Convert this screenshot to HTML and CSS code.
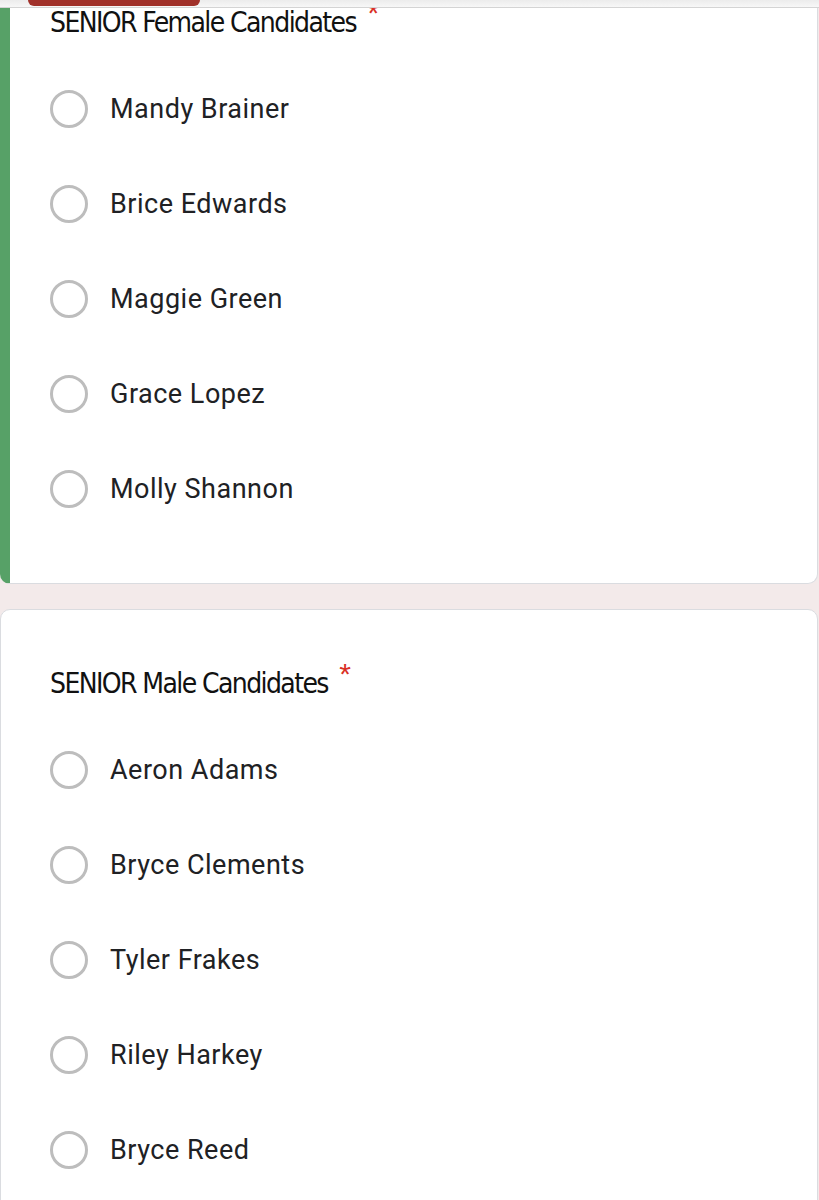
FILE: index.html
```html
<!DOCTYPE html>
<html lang="en">
<head>
    <meta charset="UTF-8">
    <meta name="viewport" content="width=device-width, initial-scale=1.0">
    <title>Senior Candidates</title>
    <link rel="stylesheet" href="styles.css">
</head>
<body>
    <div class="top-shade">
        <div class="tab"></div>
    </div>

    <div class="form">
        <div class="card active">
            <div class="question">SENIOR Female Candidates <span class="req">*</span></div>
            <label class="option"><span class="radio"></span>Mandy Brainer</label>
            <label class="option"><span class="radio"></span>Brice Edwards</label>
            <label class="option"><span class="radio"></span>Maggie Green</label>
            <label class="option"><span class="radio"></span>Grace Lopez</label>
            <label class="option"><span class="radio"></span>Molly Shannon</label>
        </div>

        <div class="card">
            <div class="question">SENIOR Male Candidates <span class="req">*</span></div>
            <label class="option"><span class="radio"></span>Aeron Adams</label>
            <label class="option"><span class="radio"></span>Bryce Clements</label>
            <label class="option"><span class="radio"></span>Tyler Frakes</label>
            <label class="option"><span class="radio"></span>Riley Harkey</label>
            <label class="option"><span class="radio"></span>Bryce Reed</label>
        </div>
    </div>
</body>
</html>
```

FILE: styles.css
```css
body {
    margin: 0;
    background-color: #f3eaea;
    font-family: Roboto, "Liberation Sans", sans-serif;
    overflow: hidden;
}
.top-shade {
    position: fixed;
    top: 0;
    left: 0;
    right: 0;
    height: 7px;
    background: linear-gradient(#ececec, #f7f7f7);
    border-bottom: 1px solid #d4d4d4;
    z-index: 2;
}
.tab {
    position: absolute;
    left: 28px;
    top: 0;
    width: 172px;
    height: 6px;
    background-color: #a1312a;
    border-radius: 0 0 8px 8px;
}
.form {
    margin-top: -52px;
}
.card {
    background-color: white;
    border: 1px solid #dadce0;
    border-radius: 10px;
    padding: 0 0 47px 49px;
    margin-bottom: 25px;
    margin-right: 1px;
}
.card.active {
    border-left: 10px solid #57a167;
    padding-left: 40px;
}
.question {
    height: 40px;
    font-family: "DejaVu Sans Condensed", "DejaVu Sans", sans-serif;
    font-size: 28px;
    letter-spacing: -1.6px;
    line-height: 40px;
    color: #111;
    padding-top: 54px;
    margin-bottom: 18px;
}
.req {
    position: relative;
    top: -9px;
    color: #d93025;
    font-family: "Liberation Sans", sans-serif;
    font-size: 30px;
    line-height: 1;
    margin-left: 5px;
}
.option {
    display: flex;
    align-items: center;
    height: 95px;
    font-size: 27px;
    color: #202124;
    letter-spacing: 0.5px;
}
.radio {
    width: 32px;
    height: 32px;
    border: 3px solid #bdbdbd;
    border-radius: 50%;
    margin-right: 22px;
    flex-shrink: 0;
}
```
